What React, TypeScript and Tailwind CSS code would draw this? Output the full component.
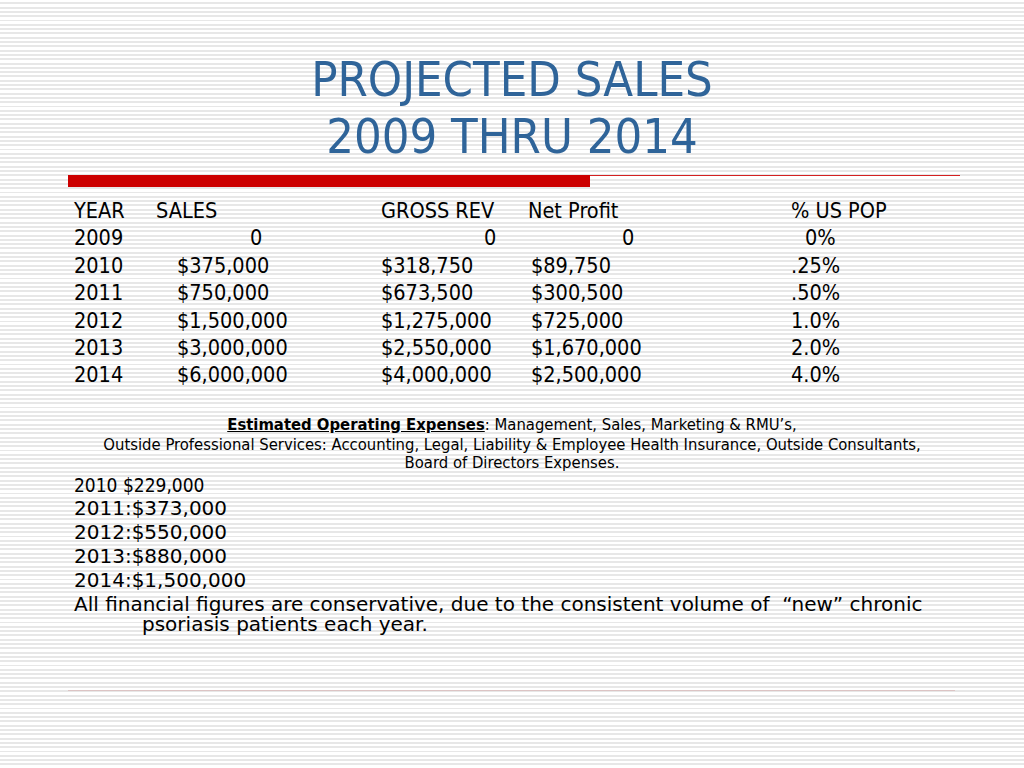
import React from "react";

type Row = {
  year: string;
  sales: string;
  gross: string;
  net: string;
  pop: string;
};

const rows: Row[] = [
  { year: "2010", sales: "$375,000", gross: "$318,750", net: "$89,750", pop: ".25%" },
  { year: "2011", sales: "$750,000", gross: "$673,500", net: "$300,500", pop: ".50%" },
  { year: "2012", sales: "$1,500,000", gross: "$1,275,000", net: "$725,000", pop: "1.0%" },
  { year: "2013", sales: "$3,000,000", gross: "$2,550,000", net: "$1,670,000", pop: "2.0%" },
  { year: "2014", sales: "$6,000,000", gross: "$4,000,000", net: "$2,500,000", pop: "4.0%" },
];

const expenses = ["2011:$373,000", "2012:$550,000", "2013:$880,000", "2014:$1,500,000"];

const gridCols = "grid grid-cols-[82px_225px_147px_263px_1fr] h-[27.4px] leading-[27.4px]";

export default function App() {
  return (
    <div className="w-[1024px] h-[768px] overflow-hidden bg-[repeating-linear-gradient(to_bottom,#ffffff_0px,#ffffff_2.3px,#e7e7e7_2.3px,#e7e7e7_4.3px)] text-black">
      {/* title */}
      <div className="pt-[51px] text-center text-[#2f6499] text-[48.5px] leading-[57px] font-['DejaVu_Sans_Condensed','DejaVu_Sans',sans-serif]">
        <div>PROJECTED SALES</div>
        <div>2009 THRU 2014</div>
      </div>

      {/* red rule */}
      <div className="mt-[10px] ml-[68px] flex items-start">
        <div className="w-[522px] h-[12px] bg-[#cc0000]" />
        <div className="w-[370px] h-px bg-[#d42020]" />
      </div>

      {/* table */}
      <div className="mt-[10px] pl-[74px] text-[21.5px] font-['DejaVu_Sans_Condensed','DejaVu_Sans',sans-serif]">
        <div className={gridCols}>
          <div>YEAR</div>
          <div>SALES</div>
          <div>GROSS REV</div>
          <div>Net Profit</div>
          <div>% US POP</div>
        </div>
        <div className={gridCols}>
          <div>2009</div>
          <div className="pl-[94px]">0</div>
          <div className="pl-[103px]">0</div>
          <div className="pl-[94px]">0</div>
          <div className="pl-[14px]">0%</div>
        </div>
        {rows.map((r) => (
          <div key={r.year} className={gridCols}>
            <div>{r.year}</div>
            <div className="pl-[21px]">{r.sales}</div>
            <div>{r.gross}</div>
            <div className="pl-[3px]">{r.net}</div>
            <div>{r.pop}</div>
          </div>
        ))}
      </div>

      {/* operating expenses */}
      <div className="mt-[27px] text-center text-[16.5px] leading-[19px] font-['DejaVu_Sans_Condensed','DejaVu_Sans',sans-serif]">
        <div className="leading-[18px] mb-[1px]">
          <span className="font-bold underline">Estimated Operating Expenses</span>: Management, Sales, Marketing &amp; RMU’s,
        </div>
        <div>
          Outside Professional Services: Accounting, Legal, Liability &amp; Employee Health Insurance, Outside Consultants,
        </div>
        <div className="-mt-[1px]">Board of Directors Expenses.</div>
      </div>

      <div className="mt-[2px] pl-[74px]">
        <div className="text-[19px] leading-[22px] font-['DejaVu_Sans_Condensed','DejaVu_Sans',sans-serif]">2010 $229,000</div>
        <div className="text-[20px] leading-[24px] font-['DejaVu_Sans',sans-serif]">
          {expenses.map((e) => (
            <div key={e}>{e}</div>
          ))}
          <div className="leading-[20px] pt-[2px] pl-[68px] -indent-[68px] w-[880px]">
            All financial figures are conservative, due to the consistent volume of&nbsp; “new” chronic psoriasis patients each year.
          </div>
        </div>
      </div>

      {/* bottom rule */}
      <div className="mt-[56px] ml-[68px] w-[887px] h-px bg-[#dcc4c4]" />
    </div>
  );
}
